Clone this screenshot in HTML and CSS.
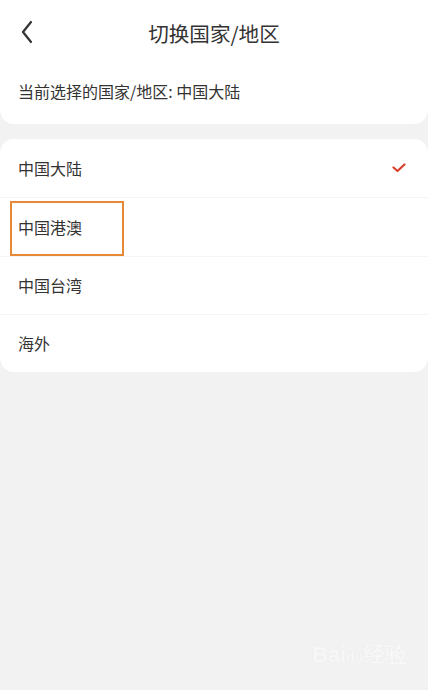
FILE: index.html
```html
<!DOCTYPE html>
<html lang="zh">
<head>
    <meta charset="UTF-8">
    <meta name="viewport" content="width=device-width, initial-scale=1.0">
    <title>切换国家/地区</title>
    <link rel="stylesheet" href="styles.css">
</head>
<body>
    <div class="top">
        <div class="header">
            <svg class="back" width="14" height="24" viewBox="0 0 14 24"><path d="M11 2 L3 12 L11 22" fill="none" stroke="#333" stroke-width="2.2" stroke-linecap="round" stroke-linejoin="round"/></svg>
            <h1>切换国家/地区</h1>
        </div>
        <p class="current">当前选择的国家/地区: 中国大陆</p>
    </div>

    <div class="list">
        <div class="row">
            <span>中国大陆</span>
            <svg class="check" width="14" height="10" viewBox="0 0 14 10"><path d="M1.5 4.5 L5.5 8 L12.5 1.5" fill="none" stroke="#d8402e" stroke-width="2.2" stroke-linecap="round" stroke-linejoin="round"/></svg>
        </div>
        <div class="row"><span>中国港澳</span><div class="mark"></div></div>
        <div class="row"><span>中国台湾</span></div>
        <div class="row"><span>海外</span></div>
    </div>

    <div class="watermark">Bai<span class="paw">du</span>经验</div>
</body>
</html>
```

FILE: styles.css
```css
body { margin: 0; background: #f2f2f2; font-family: "Noto Sans CJK SC", "Liberation Sans", sans-serif; color: #333; height: 690px; position: relative; overflow: hidden; }
.top { background: #fff; border-radius: 0 0 14px 14px; padding: 0 18px; height: 124px; box-sizing: border-box; }
.header { height: 66px; display: flex; align-items: center; justify-content: center; position: relative; }
.back { position: absolute; left: 2px; top: 20px; }
.header h1 { margin: 0; font-size: 20.6px; font-weight: 400; color: #333; }
.current { margin: 13px 0 0; font-size: 16px; color: #333; }
.list { background: #fff; border-radius: 14px; margin-top: 15px; }
.row { height: 58.25px; box-sizing: border-box; display: flex; align-items: center; justify-content: space-between; padding: 0 22px 0 18px; border-top: 1px solid #f5f5f5; position: relative; font-size: 16px; }
.row:first-child { border-top: none; }
.mark { position: absolute; left: 10px; top: 3px; width: 110px; height: 51px; border: 2px solid #e8893a; }
.watermark { position: absolute; left: 312px; top: 640px; font-family: "Liberation Sans", sans-serif; font-size: 22px; font-weight: 700; color: #f7f7f7; text-shadow: 0 0 1px #e6e6e6; }
.paw { font-size: 14px; }
```
